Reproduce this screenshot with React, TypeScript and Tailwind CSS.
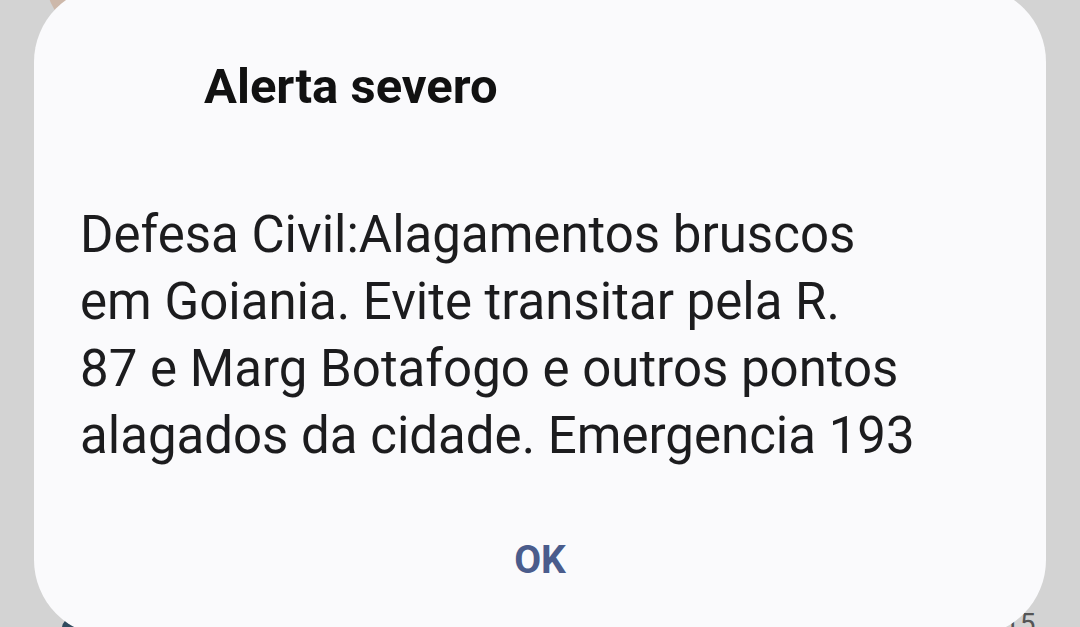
import React from 'react';

const lines = [
  'Defesa Civil:Alagamentos bruscos',
  'em Goiania. Evite transitar pela R.',
  '87 e Marg Botafogo e outros pontos',
  'alagados da cidade. Emergencia 193',
];

export default function App() {
  return (
    <div className="relative w-[1080px] h-[627px] overflow-hidden bg-[#d3d3d3] font-['Roboto',sans-serif]">
      {/* things behind the dialog */}
      <div className="absolute left-[48px] top-[-46px] w-[80px] h-[70px] rounded-full bg-[#cdb8aa]" />
      <div className="absolute left-[62px] top-[618px] w-[20px] h-[20px] rounded-full bg-[#2f4a5e]" />
      <div className="absolute left-[1004px] top-[608px] text-[28px] leading-[32px] text-[#555]">15</div>

      <div className="relative px-[34px] -mt-[14px]">
        <div className="h-[650px] rounded-[76px] bg-[#fafafc] flex flex-col">
          <h1 className="pl-[170px] pt-[72px] text-[49px] font-bold leading-[58px] text-[#111]">
            Alerta severo
          </h1>
          <div className="pl-[46px] pt-[85px] text-[51px] leading-[67px] text-[#1c1c1e]">
            {lines.map((l) => (
              <p key={l}>{l}</p>
            ))}
          </div>
          <div className="flex justify-center pt-[68px]">
            <button className="text-[39px] font-bold text-[#4a5c8c] leading-[46px]">OK</button>
          </div>
        </div>
      </div>
    </div>
  );
}
